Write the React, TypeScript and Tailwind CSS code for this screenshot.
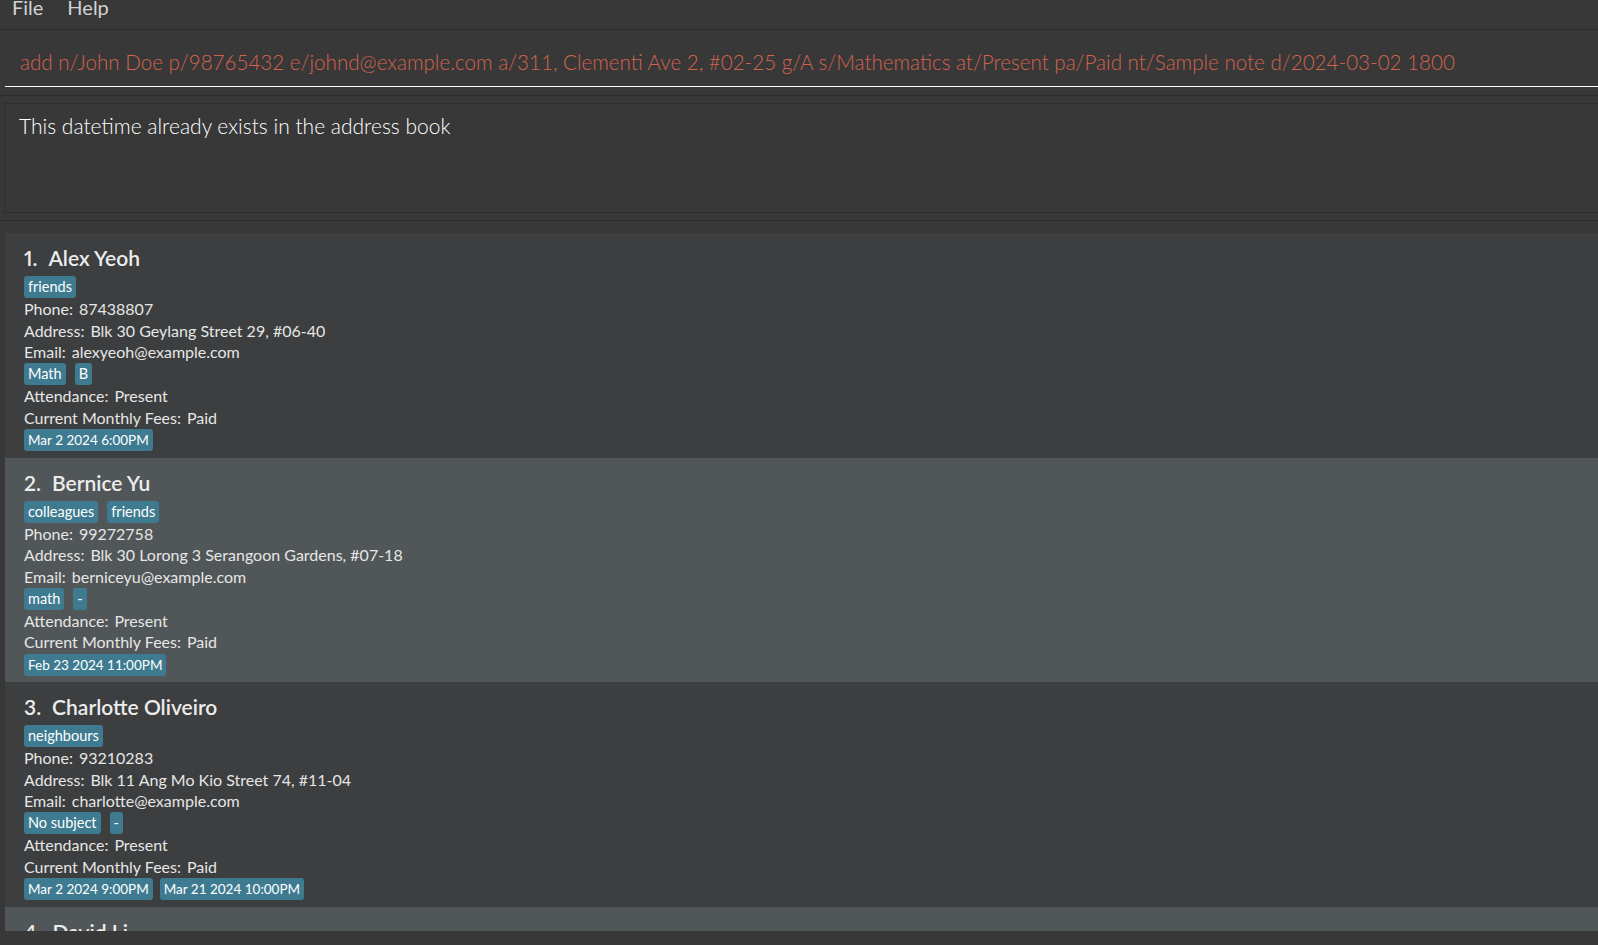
const people = [
  {
    name: "Alex Yeoh",
    tags: ["friends"],
    phone: "87438807",
    address: "Blk 30 Geylang Street 29, #06-40",
    email: "alexyeoh@example.com",
    subjects: ["Math", "B"],
    dates: ["Mar 2 2024 6:00PM"],
  },
  {
    name: "Bernice Yu",
    tags: ["colleagues", "friends"],
    phone: "99272758",
    address: "Blk 30 Lorong 3 Serangoon Gardens, #07-18",
    email: "berniceyu@example.com",
    subjects: ["math", "-"],
    dates: ["Feb 23 2024 11:00PM"],
  },
  {
    name: "Charlotte Oliveiro",
    tags: ["neighbours"],
    phone: "93210283",
    address: "Blk 11 Ang Mo Kio Street 74, #11-04",
    email: "charlotte@example.com",
    subjects: ["No subject", "-"],
    dates: ["Mar 2 2024 9:00PM", "Mar 21 2024 10:00PM"],
  },
  {
    name: "David Li",
    tags: ["family"],
    phone: "91031282",
    address: "Blk 436 Serangoon Gardens Street 26, #16-43",
    email: "lidavid@example.com",
    subjects: ["No subject", "-"],
    dates: ["Mar 3 2024 5:00PM"],
  },
];

const COMMAND =
  "add n/John Doe p/98765432 e/johnd@example.com a/311, Clementi Ave 2, #02-25 g/A s/Mathematics at/Present pa/Paid nt/Sample note d/2024-03-02 1800";

function Tag({ text }: { text: string }) {
  return (
    <span className="h-[22px] rounded-[3px] bg-[#3e7b91] px-[4px] text-[14.5px] leading-[22px] text-white">
      {text}
    </span>
  );
}

function DateTag({ text }: { text: string }) {
  return (
    <span className="h-[22px] rounded-[3px] bg-[#3e7b91] px-[4px] text-[13.5px] leading-[22px] text-white">
      {text}
    </span>
  );
}

function Field({ label, value }: { label: string; value: string }) {
  return (
    <div className="flex h-[21.7px] gap-[6px] text-[16px] leading-[21.7px]">
      <span>{label}</span>
      <span>{value}</span>
    </div>
  );
}

export default function App() {
  return (
    <div className="flex h-[945px] w-[1598px] flex-col overflow-hidden bg-[#383838] font-['Lato','Liberation_Sans',sans-serif] text-[#e6e6e6]">
      {/* menu bar */}
      <div className="flex h-[30px] shrink-0 gap-[24px] border-b border-[#2b2b2b] pl-[12px] text-[20px] leading-[20px] text-[#d2d2d2]">
        <span className="-mt-[3px]">File</span>
        <span className="-mt-[3px]">Help</span>
      </div>

      {/* command box */}
      <div className="h-[66px] shrink-0 border-b border-[#2b2b2b] pl-[5px] pt-[19px]">
        <div className="w-[1620px] border-b-[1.5px] border-white pb-[11px] pl-[15px] text-[20.6px] font-light leading-[26px] whitespace-nowrap text-[#d4634e]">
          {COMMAND}
        </div>
      </div>

      {/* result display */}
      <div className="h-[125px] shrink-0 border-b border-[#2b2b2b] pl-[4px] pt-[7px]">
        <div className="h-[110px] w-[1620px] border border-[#2e2e2e] px-[14px] pt-[9px] text-[21px] font-light leading-[26px] text-white">
          This datetime already exists in the address book
        </div>
      </div>

      {/* person list */}
      <div className="flex min-h-0 flex-1 flex-col pl-[5px] pt-[12px]">
        <div className="h-[698px] shrink-0 overflow-hidden">
          {people.map((p, i) => (
            <div
              key={p.name}
              className={`flex h-[224.5px] flex-col pl-[19px] pt-[11px] ${i % 2 === 1 ? "bg-[#515658]" : "bg-[#3c3e3f]"}`}
            >
              <div className="flex h-[27px] gap-[11px] text-[21px] font-semibold leading-[27px] text-[#ececec] proportional-nums">
                <span>{i + 1}.</span>
                <span>{p.name}</span>
              </div>
              <div className="mt-[5px] flex gap-[9px]">
                {p.tags.map((t) => (
                  <Tag key={t} text={t} />
                ))}
              </div>
              <Field label="Phone:" value={p.phone} />
              <Field label="Address:" value={p.address} />
              <Field label="Email:" value={p.email} />
              <div className="flex gap-[9px]">
                {p.subjects.map((t, k) => (
                  <Tag key={k} text={t} />
                ))}
              </div>
              <Field label="Attendance:" value="Present" />
              <Field label="Current Monthly Fees:" value="Paid" />
              <div className="mt-[1px] flex gap-[7px]">
                {p.dates.map((d) => (
                  <DateTag key={d} text={d} />
                ))}
              </div>
            </div>
          ))}
        </div>
      </div>
    </div>
  );
}
